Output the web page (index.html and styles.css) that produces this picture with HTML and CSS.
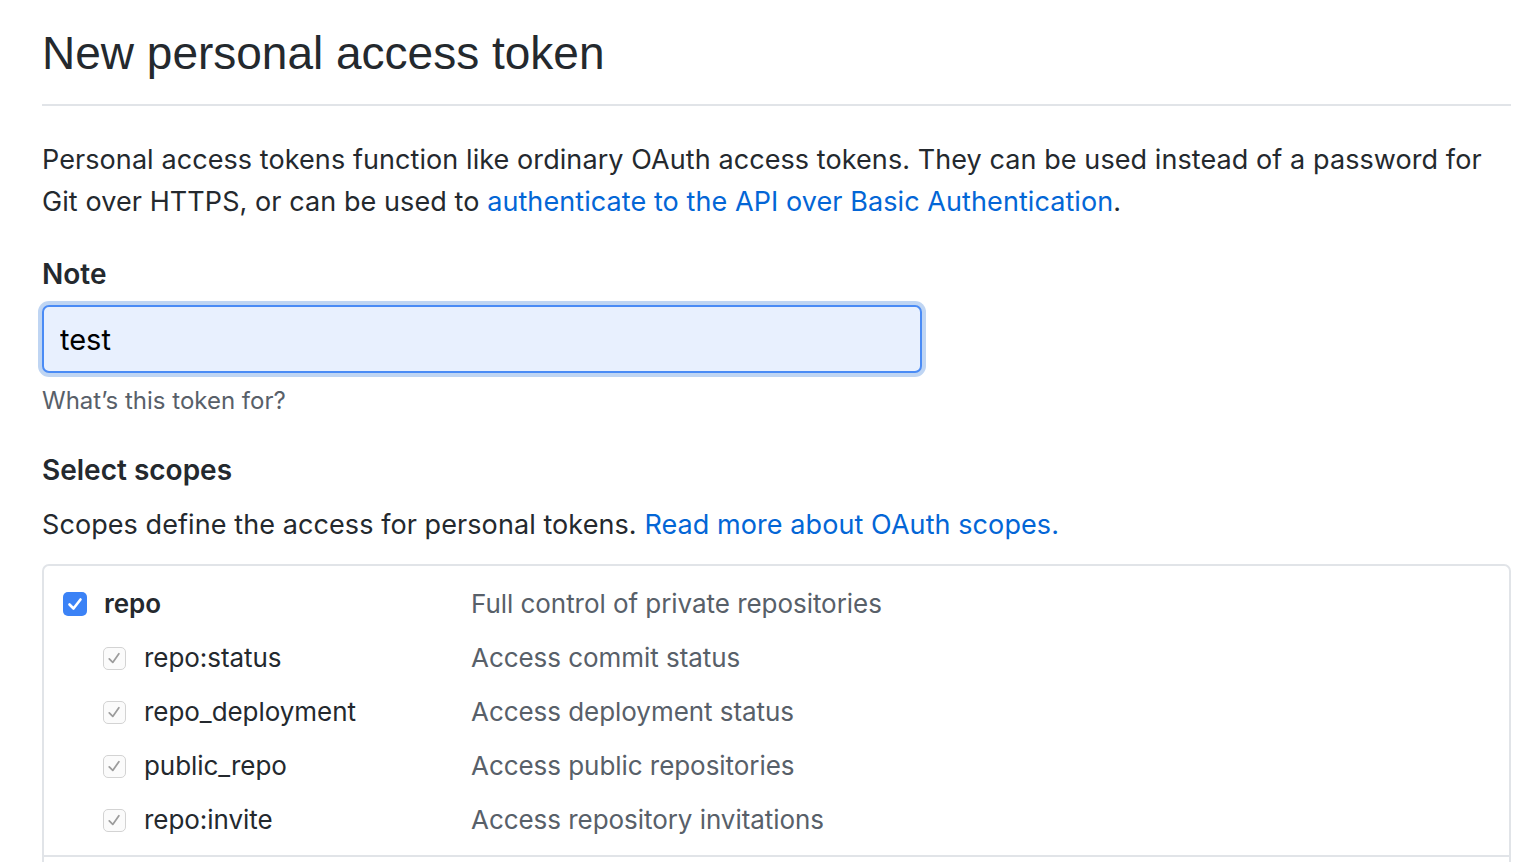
FILE: index.html
```html
<!DOCTYPE html>
<html lang="en">
<head>
<meta charset="utf-8">
<title>New personal access token</title>
<link rel="stylesheet" href="styles.css">
</head>
<body>
<div class="page">
  <div class="subhead">
    <h1 class="subhead-title">New personal access token</h1>
  </div>

  <p class="intro">Personal access tokens function like ordinary OAuth access tokens. They can be used instead of a password for Git over HTTPS, or can be used to <a href="#">authenticate to the API over Basic Authentication</a>.</p>

  <div class="form-group">
    <label class="label" for="note">Note</label>
    <div class="input-wrap">
      <input id="note" class="form-control" type="text" value="test">
    </div>
    <p class="note">What’s this token for?</p>
  </div>

  <h3 class="scopes-title">Select scopes</h3>
  <p class="scopes-desc">Scopes define the access for personal tokens. <a href="#">Read more about OAuth scopes.</a></p>

  <ul class="scopes">
    <li class="scope-group">
      <div class="scope-row">
        <div class="scope-name">
          <span class="cb cb-on"><svg viewBox="0 0 24 24" width="24" height="24"><path d="M6.5 12.5 L10.5 16.5 L17.5 7.5" fill="none" stroke="#fff" stroke-width="2.6" stroke-linecap="round" stroke-linejoin="round"/></svg></span>
          <strong>repo</strong>
        </div>
        <div class="scope-desc">Full control of private repositories</div>
      </div>
      <div class="scope-row sub">
        <div class="scope-name">
          <span class="cb cb-dis"><svg viewBox="0 0 24 24" width="23" height="23"><path d="M6 12.5 L10 16.5 L17 6.5" fill="none" stroke="#9c9c9c" stroke-width="2" stroke-linecap="round" stroke-linejoin="round"/></svg></span>
          <span>repo:status</span>
        </div>
        <div class="scope-desc">Access commit status</div>
      </div>
      <div class="scope-row sub">
        <div class="scope-name">
          <span class="cb cb-dis"><svg viewBox="0 0 24 24" width="23" height="23"><path d="M6 12.5 L10 16.5 L17 6.5" fill="none" stroke="#9c9c9c" stroke-width="2" stroke-linecap="round" stroke-linejoin="round"/></svg></span>
          <span>repo_deployment</span>
        </div>
        <div class="scope-desc">Access deployment status</div>
      </div>
      <div class="scope-row sub">
        <div class="scope-name">
          <span class="cb cb-dis"><svg viewBox="0 0 24 24" width="23" height="23"><path d="M6 12.5 L10 16.5 L17 6.5" fill="none" stroke="#9c9c9c" stroke-width="2" stroke-linecap="round" stroke-linejoin="round"/></svg></span>
          <span>public_repo</span>
        </div>
        <div class="scope-desc">Access public repositories</div>
      </div>
      <div class="scope-row sub">
        <div class="scope-name">
          <span class="cb cb-dis"><svg viewBox="0 0 24 24" width="23" height="23"><path d="M6 12.5 L10 16.5 L17 6.5" fill="none" stroke="#9c9c9c" stroke-width="2" stroke-linecap="round" stroke-linejoin="round"/></svg></span>
          <span>repo:invite</span>
        </div>
        <div class="scope-desc">Access repository invitations</div>
      </div>
    </li>
    <li class="scope-group">
      <div class="scope-row">
        <div class="scope-name">
          <span class="cb cb-off"></span>
          <strong>write:packages</strong>
        </div>
        <div class="scope-desc">Upload packages to github package registry</div>
      </div>
    </li>
  </ul>
</div>
</body>
</html>
```

FILE: styles.css
```css
* {
  box-sizing: border-box;
}

html, body {
  margin: 0;
  padding: 0;
  background: #ffffff;
}

body {
  font-family: Inter, "Noto Sans", "Liberation Sans", sans-serif;
  font-size: 27px;
  line-height: 42px;
  letter-spacing: 0.08px;
  color: #24292e;
}

a {
  color: #0366d6;
  text-decoration: none;
}

.page {
  width: 1469px;
  margin-left: 42px;
}

.subhead {
  padding-top: 23px;
  padding-bottom: 21px;
  border-bottom: 2px solid #e1e4e8;
}

.subhead-title {
  margin: 0;
  font-family: "Liberation Sans", Arial, sans-serif;
  font-size: 46px;
  line-height: 60px;
  font-weight: 400;
  letter-spacing: 0;
  color: #24292e;
}

.intro {
  margin: 33px 0 0;
}

.form-group {
  margin-top: 30px;
}

.label {
  display: block;
  font-size: 28px;
  font-weight: 600;
  letter-spacing: 0;
  margin-bottom: 10px;
}

.input-wrap {
  width: 880px;
}

.form-control {
  display: block;
  width: 880px;
  height: 68px;
  padding: 0 16px;
  margin: 0;
  font-family: Inter, "Noto Sans", sans-serif;
  font-size: 29px;
  color: #000000;
  background: #e8f0fe;
  border: 2px solid #4a8bf5;
  border-radius: 7px;
  box-shadow: 0 0 0 4px #bfd5f3;
  outline: none;
}

.note {
  margin: 10px 0 0;
  font-size: 24px;
  line-height: 36px;
  letter-spacing: 0;
  color: #586069;
}

.scopes-title {
  margin: 30px 0 0;
  font-size: 28px;
  line-height: 42px;
  font-weight: 600;
  letter-spacing: 0;
}

.scopes-desc {
  margin: 13px 0 0;
}

.scopes {
  list-style: none;
  margin: 18px 0 0;
  padding: 0;
  border: 2px solid #e1e4e8;
  border-radius: 7px;
  font-size: 26px;
  letter-spacing: -0.05px;
}

.scope-group {
  padding: 11px 0 8px;
}

.scope-group + .scope-group {
  border-top: 2px solid #e1e4e8;
}

.scope-row {
  display: grid;
  grid-template-columns: 408px 1fr;
  align-items: center;
  height: 54px;
  padding-left: 19px;
}

.scope-name {
  display: flex;
  align-items: center;
  gap: 17px;
}

.scope-row.sub .scope-name {
  padding-left: 40px;
  gap: 18px;
}

.scope-name strong {
  font-weight: 600;
}

.scope-desc {
  color: #586069;
}

.cb {
  display: inline-flex;
  align-items: center;
  justify-content: center;
  flex: none;
  border-radius: 5px;
}

.cb svg {
  display: block;
}

.cb-on {
  width: 24px;
  height: 24px;
  background: #3b82f6;
}

.cb-dis {
  width: 23px;
  height: 23px;
  background: #fbfbfb;
  border: 1.5px solid #d3d3d3;
}

.cb-off {
  width: 24px;
  height: 24px;
  background: #ffffff;
  border: 1.5px solid #b5b5b5;
}
```
